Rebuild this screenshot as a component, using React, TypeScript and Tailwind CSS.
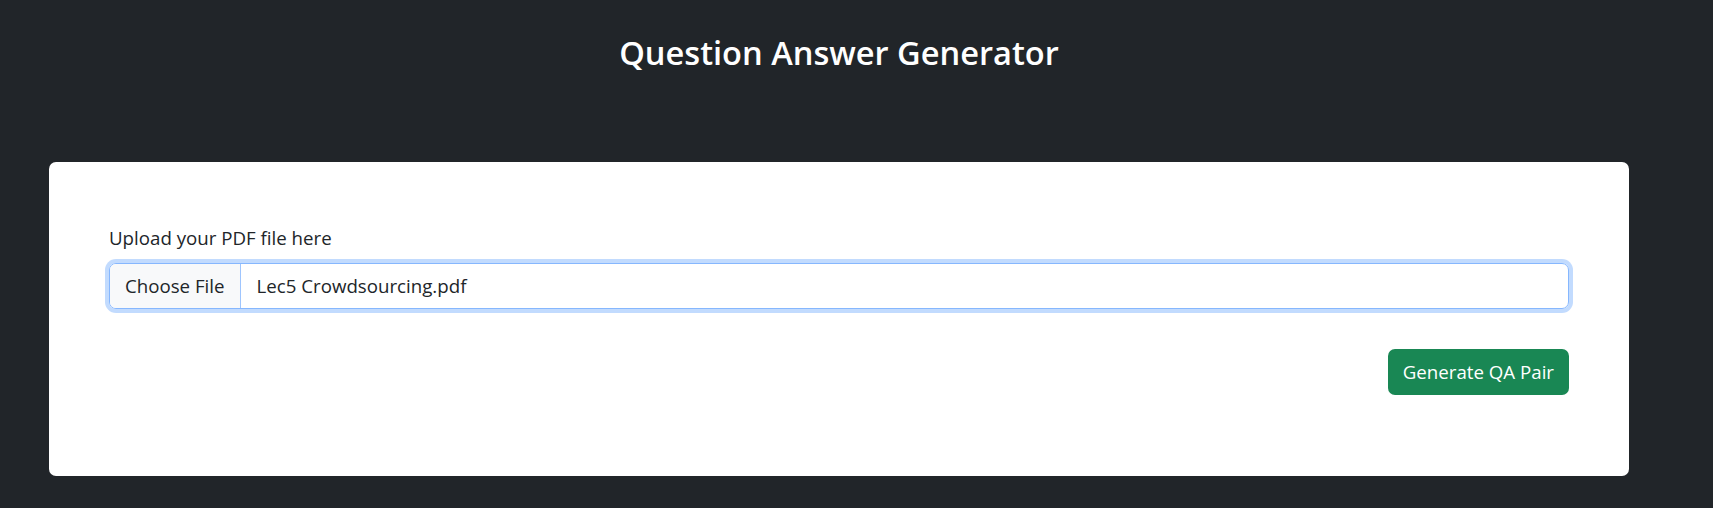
import React from "react";

export default function App() {
  return (
    <div
      className="w-[1713px] h-[508px] bg-[#212529] overflow-hidden pl-[49px] pr-[84px]"
      style={{ fontFamily: '"Open Sans", "Noto Sans", sans-serif' }}
    >
      <h1 className="pt-[33px] text-center text-white text-[32.6px] leading-[40px] font-semibold">
        Question Answer Generator
      </h1>
      <div className="mt-[89px] h-[314px] rounded-[7px] bg-white px-[60px] pt-[61px]">
        <label className="block text-[18.7px] leading-[29px] text-[#212529]">
          Upload your PDF file here
        </label>
        <div className="mt-[11px] flex h-[46px] items-stretch rounded-[7px] border border-[#86b7fe] ring-4 ring-[#0d6efd]/25 overflow-hidden text-[18.7px] text-[#212529]">
          <div className="flex items-center bg-[#f8f9fa] px-[15px] border-r border-[#9ec5fe]">
            Choose File
          </div>
          <div className="flex items-center pl-[16px]">Lec5 Crowdsourcing.pdf</div>
        </div>
        <div className="mt-[40px] flex justify-end">
          <button className="h-[46px] rounded-[7px] bg-[#198754] px-[15px] text-[18.7px] text-white">
            Generate QA Pair
          </button>
        </div>
      </div>
    </div>
  );
}
